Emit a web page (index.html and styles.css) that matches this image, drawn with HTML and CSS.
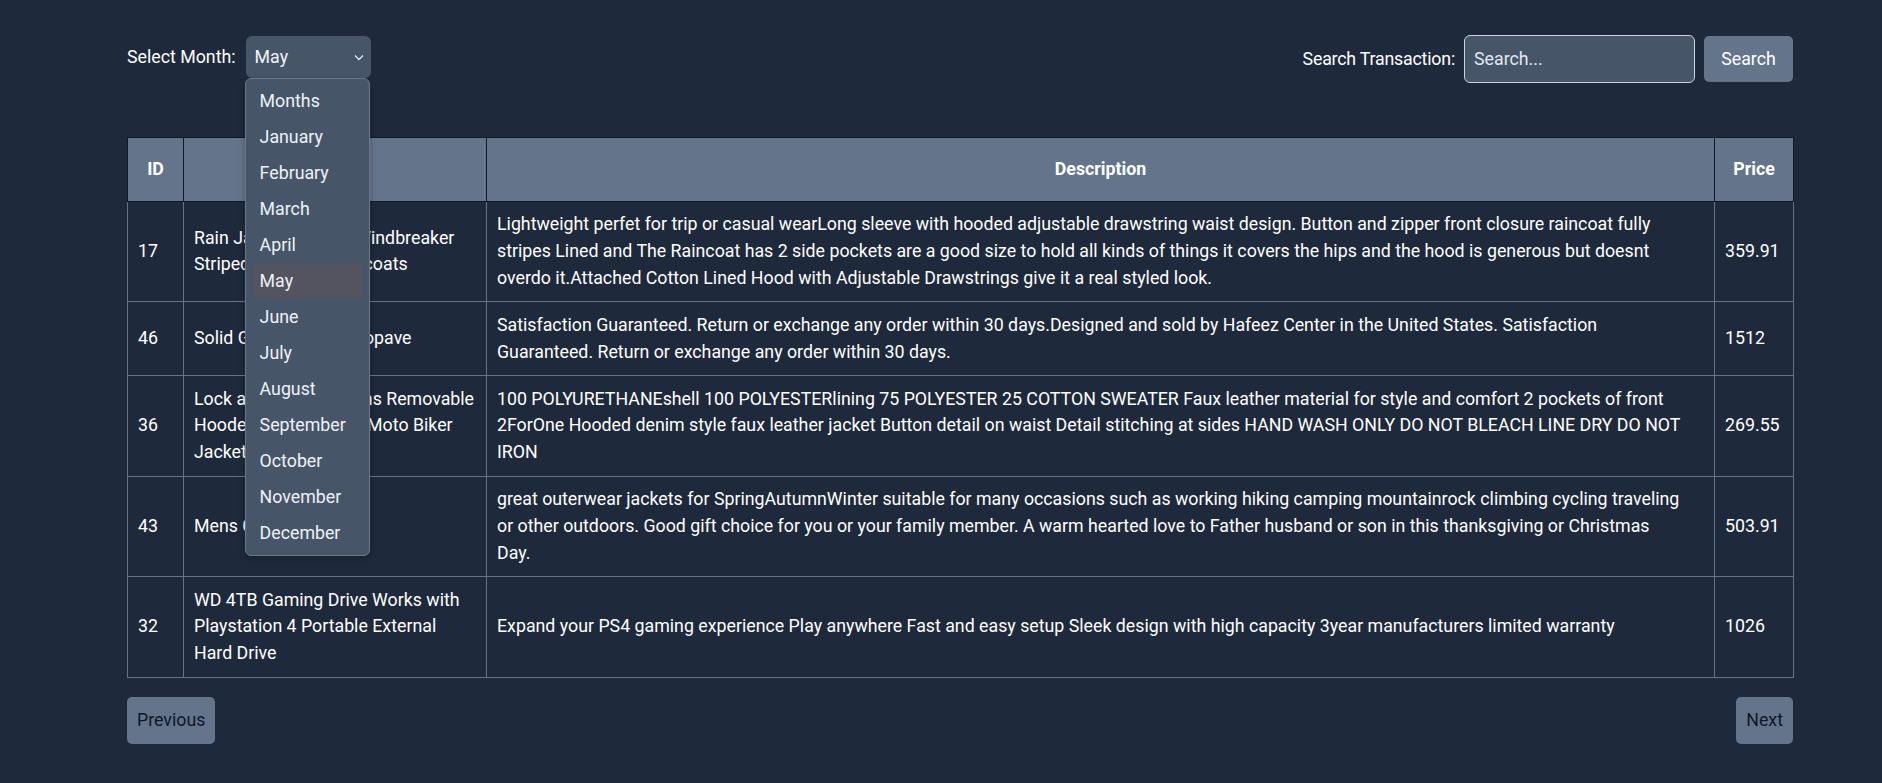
FILE: index.html
```html
<!DOCTYPE html>
<html lang="en">
<head>
<meta charset="utf-8">
<title>Transactions</title>
<link rel="stylesheet" href="styles.css">
</head>
<body>
<div class="page">
  <div class="toolbar">
    <div class="month">
      <label class="label">Select Month:</label>
      <div class="select-wrap">
        <div class="select">
          <span>May</span>
          <svg class="chev" width="10" height="7" viewBox="0 0 10 7"><polyline points="1,1.5 5,5.5 9,1.5" fill="none" stroke="#e2e8f0" stroke-width="1.3"/></svg>
        </div>
        <ul class="menu">
          <li>Months</li>
          <li>January</li>
          <li>February</li>
          <li>March</li>
          <li>April</li>
          <li class="active">May</li>
          <li>June</li>
          <li>July</li>
          <li>August</li>
          <li>September</li>
          <li>October</li>
          <li>November</li>
          <li>December</li>
        </ul>
      </div>
    </div>
    <div class="search">
      <label class="label label-search">Search Transaction:</label>
      <input class="search-input" type="text" placeholder="Search...">
      <button class="btn btn-search">Search</button>
    </div>
  </div>

  <table class="tx">
    <colgroup>
      <col class="c-id"><col class="c-title"><col class="c-desc"><col class="c-price">
    </colgroup>
    <thead>
      <tr><th>ID</th><th>Title</th><th>Description</th><th>Price</th></tr>
    </thead>
    <tbody>
      <tr>
        <td>17</td>
        <td>Rain Jacket Women Windbreaker<br>Striped Climbing Raincoats</td>
        <td>Lightweight perfet for trip or casual wearLong sleeve with hooded adjustable drawstring waist design. Button and zipper front closure raincoat fully<br>stripes Lined and The Raincoat has 2 side pockets are a good size to hold all kinds of things it covers the hips and the hood is generous but doesnt<br>overdo it.Attached Cotton Lined Hood with Adjustable Drawstrings give it a real styled look.</td>
        <td>359.91</td>
      </tr>
      <tr>
        <td>46</td>
        <td>Solid Gold Petite Micropave</td>
        <td>Satisfaction Guaranteed. Return or exchange any order within 30 days.Designed and sold by Hafeez Center in the United States. Satisfaction<br>Guaranteed. Return or exchange any order within 30 days.</td>
        <td>1512</td>
      </tr>
      <tr>
        <td>36</td>
        <td>Lock and Love Womens Removable<br>Hooded Faux Leather Moto Biker<br>Jacket</td>
        <td>100 POLYURETHANEshell 100 POLYESTERlining 75 POLYESTER 25 COTTON SWEATER Faux leather material for style and comfort 2 pockets of front<br>2ForOne Hooded denim style faux leather jacket Button detail on waist Detail stitching at sides HAND WASH ONLY DO NOT BLEACH LINE DRY DO NOT<br>IRON</td>
        <td>269.55</td>
      </tr>
      <tr>
        <td>43</td>
        <td>Mens Cotton Jacket</td>
        <td>great outerwear jackets for SpringAutumnWinter suitable for many occasions such as working hiking camping mountainrock climbing cycling traveling<br>or other outdoors. Good gift choice for you or your family member. A warm hearted love to Father husband or son in this thanksgiving or Christmas<br>Day.</td>
        <td>503.91</td>
      </tr>
      <tr>
        <td>32</td>
        <td>WD 4TB Gaming Drive Works with<br>Playstation 4 Portable External<br>Hard Drive</td>
        <td>Expand your PS4 gaming experience Play anywhere Fast and easy setup Sleek design with high capacity 3year manufacturers limited warranty</td>
        <td>1026</td>
      </tr>
    </tbody>
  </table>

  <div class="pager">
    <button class="btn btn-page">Previous</button>
    <button class="btn btn-page">Next</button>
  </div>
</div>
</body>
</html>
```
FILE: styles.css
```css
* { box-sizing: border-box; }

html, body {
  margin: 0;
  background: #1e293b;
}

body {
  font-family: Roboto, "Liberation Sans", sans-serif;
  font-size: 17.78px;
  line-height: 26.67px;
  color: #ffffff;
}

.page {
  padding: 35px 89px 40px 127px;
}

.toolbar {
  display: flex;
  justify-content: space-between;
  align-items: flex-start;
  height: 48px;
}

.month {
  display: flex;
  align-items: center;
  gap: 10px;
  padding-top: 1px;
}

.label {
  color: #ffffff;
}

.label-search {
  letter-spacing: -0.2px;
}

.select-wrap {
  position: relative;
}

.select {
  width: 125px;
  height: 42px;
  display: flex;
  align-items: center;
  justify-content: space-between;
  padding: 0 7px 0 9px;
  background: #475569;
  border-radius: 6px;
  color: #f1f5f9;
}

.chev {
  display: block;
  margin-top: 1px;
}

.menu {
  position: absolute;
  top: 42px;
  left: -1px;
  width: 125px;
  margin: 0;
  padding: 4px 7px;
  list-style: none;
  background: #475569;
  border: 1px solid #6b7689;
  border-radius: 6px;
  box-shadow: 0 2px 6px rgba(0, 0, 0, 0.25);
  z-index: 10;
}

.menu li {
  height: 36px;
  line-height: 36px;
  padding-left: 7px;
  color: #eef2f7;
  border-radius: 3px;
}

.menu li.active {
  background: #53545f;
}

.search {
  display: flex;
  align-items: center;
  height: 48px;
}

.search-input {
  width: 231px;
  height: 48px;
  margin-left: 9px;
  padding: 0 9px;
  background: #475569;
  border: 1px solid #cbd5e1;
  border-radius: 6px;
  color: #f1f5f9;
  font: inherit;
  outline: none;
}

.search-input::placeholder {
  color: #e2e8f0;
  opacity: 1;
}

.btn {
  font: inherit;
  border: none;
  background: #64748b;
  border-radius: 5px;
  cursor: pointer;
}

.btn-search {
  margin-left: 9px;
  height: 46px;
  width: 89px;
  padding: 0;
  color: #ffffff;
}

.tx {
  margin-top: 54px;
  width: 100%;
  border-collapse: collapse;
  table-layout: fixed;
}

.c-id { width: 56px; }
.c-title { width: 303px; }
.c-desc { width: 1228px; }
.c-price { width: 79px; }

.tx th {
  background: #64748b;
  color: #ffffff;
  font-weight: 700;
  text-align: center;
  padding: 18px 10px 18px;
  border: 1px solid #111827;
  line-height: 26.67px;
}

.tx td {
  padding: 9.75px 9px 9.75px 10px;
  border: 1px solid #64748b;
  vertical-align: middle;
  text-align: left;
  white-space: nowrap;
}

.pager {
  display: flex;
  justify-content: space-between;
  margin-top: 19px;
}

.btn-page {
  height: 47px;
  padding: 0 10px;
  color: #0f172a;
}
```
